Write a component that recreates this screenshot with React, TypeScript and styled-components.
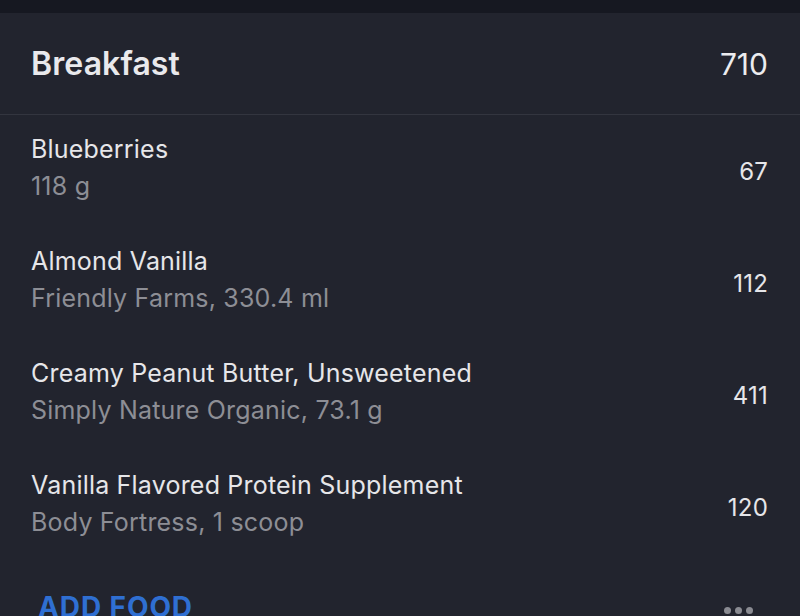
import React from "react";
import styled, { createGlobalStyle } from "styled-components";

const Global = createGlobalStyle`
  html, body { margin: 0; padding: 0; background: #22242e; }
  body { font-family: Inter, "Noto Sans", "Liberation Sans", sans-serif; -webkit-font-smoothing: antialiased; }
`;

const Page = styled.div`
  width: 800px;
  height: 616px;
  overflow: hidden;
  background: #22242e;
  display: flex;
  flex-direction: column;
`;

const TopBand = styled.div`
  height: 13px;
  background: #161821;
  flex: none;
`;

const Header = styled.div`
  height: 102px;
  flex: none;
  display: flex;
  align-items: center;
  justify-content: space-between;
  padding: 0 32px 0 31px;
  border-bottom: 1.5px solid #33353f;
  box-sizing: border-box;
`;

const Title = styled.h1`
  margin: 0;
  font-size: 32px;
  font-weight: 600;
  color: #e9e9ec;
  letter-spacing: 0.1px;
`;

const Total = styled.span`
  font-size: 30px;
  font-weight: 400;
  color: #ececef;
`;

const List = styled.div`
  display: flex;
  flex-direction: column;
`;

const Row = styled.div`
  height: 112px;
  display: flex;
  align-items: center;
  justify-content: space-between;
  padding: 0 32px 0 31px;
  box-sizing: border-box;
`;

const Info = styled.div`
  display: flex;
  flex-direction: column;
  margin-top: -6px;
`;

const Name = styled.span`
  font-size: 25px;
  line-height: 37px;
  letter-spacing: 0.2px;
  color: #e6e6e9;
`;

const Sub = styled.span`
  font-size: 25px;
  line-height: 37px;
  letter-spacing: 0.2px;
  color: #8d8e95;
`;

const Cal = styled.span`
  font-size: 24px;
  letter-spacing: 0.2px;
  color: #e6e6e9;
`;

const Footer = styled.div`
  display: flex;
  align-items: flex-start;
  justify-content: space-between;
  padding: 27px 47px 0 38px;
`;

const AddFood = styled.span`
  font-size: 28px;
  font-weight: 700;
  color: #2f6fd2;
  letter-spacing: 0.9px;
`;

const Dots = styled.div`
  display: flex;
  gap: 4px;
  margin-top: 17px;
`;

const Dot = styled.span`
  width: 7px;
  height: 7px;
  border-radius: 50%;
  background: #8a8b92;
`;

const items = [
  { name: "Blueberries", sub: "118 g", cal: 67 },
  { name: "Almond Vanilla", sub: "Friendly Farms, 330.4 ml", cal: 112 },
  { name: "Creamy Peanut Butter, Unsweetened", sub: "Simply Nature Organic, 73.1 g", cal: 411 },
  { name: "Vanilla Flavored Protein Supplement", sub: "Body Fortress, 1 scoop", cal: 120 },
];

export default function App() {
  return (
    <Page>
      <Global />
      <TopBand />
      <Header>
        <Title>Breakfast</Title>
        <Total>710</Total>
      </Header>
      <List>
        {items.map((it) => (
          <Row key={it.name}>
            <Info>
              <Name>{it.name}</Name>
              <Sub>{it.sub}</Sub>
            </Info>
            <Cal>{it.cal}</Cal>
          </Row>
        ))}
      </List>
      <Footer>
        <AddFood>ADD FOOD</AddFood>
        <Dots>
          <Dot />
          <Dot />
          <Dot />
        </Dots>
      </Footer>
    </Page>
  );
}
